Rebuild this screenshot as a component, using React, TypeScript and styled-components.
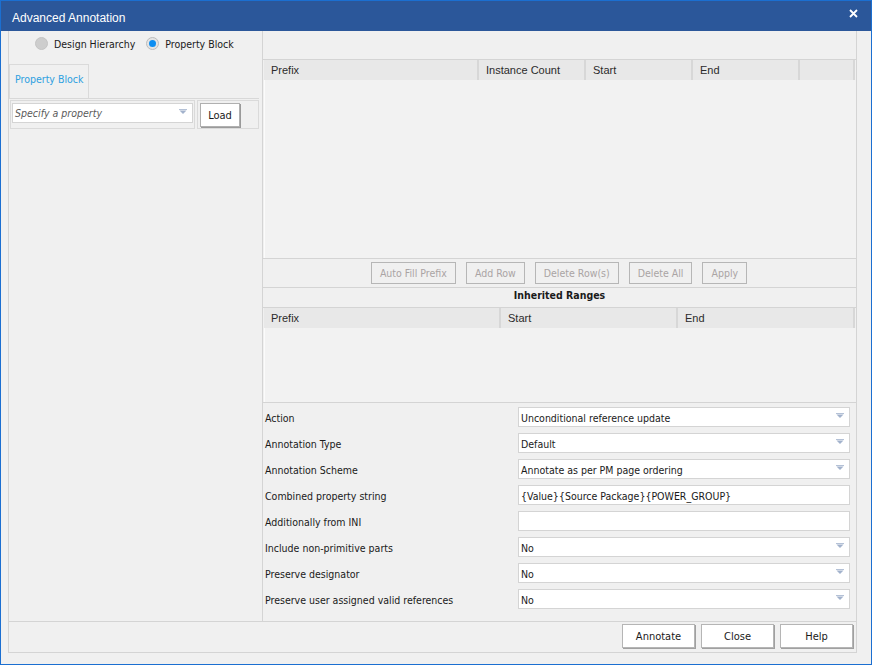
import React from "react";
import styled, { createGlobalStyle } from "styled-components";

const Global = createGlobalStyle`
  html, body { margin: 0; padding: 0; background: #ffffff; }
  * { box-sizing: border-box; }
  #root { width: 872px; height: 665px; }
`;

const UI = `"DejaVu Sans Condensed", "DejaVu Sans", sans-serif`;
const ARIAL = `"Liberation Sans", Arial, sans-serif`;

const Window = styled.div`
  width: 872px;
  height: 665px;
  border: 1px solid #1b6fd1;
  background: #f0f0f0;
  display: flex;
  flex-direction: column;
  font-family: ${UI};
  font-size: 10.5px;
  color: #1a1a1a;
`;

const TitleBar = styled.div`
  height: 30px;
  flex: none;
  background: #2b579a;
  display: flex;
  align-items: center;
  justify-content: space-between;
  padding: 0 13px 0 11px;
`;

const Title = styled.span`
  font-family: ${ARIAL};
  font-size: 12px;
  color: #ffffff;
  margin-top: 3px;
`;

const CloseGlyph = styled.svg`
  width: 9px;
  height: 9px;
  margin-top: -6px;
`;

const Body = styled.div`
  flex: 1;
  padding: 0 13px 11px 7px;
  display: flex;
`;

const Frame = styled.div`
  width: 849px;
  border-left: 1px solid #d4d4d4;
  border-right: 1px solid #d4d4d4;
  border-bottom: 1px solid #d4d4d4;
  display: flex;
  flex-direction: column;
`;

const Main = styled.div`
  height: 590px;
  display: flex;
`;

const LeftPanel = styled.div`
  width: 254px;
  border-right: 1px solid #d4d4d4;
  display: flex;
  flex-direction: column;
`;

const RadioRow = styled.div`
  height: 25px;
  display: flex;
  align-items: center;
  padding-left: 26px;
  gap: 11px;
`;

const RadioItem = styled.label`
  display: flex;
  align-items: center;
  gap: 6px;
  font-size: 10.5px;
`;

const RadioCircle = styled.span<{ $on?: boolean }>`
  width: 13px;
  height: 13px;
  border-radius: 50%;
  border: 1px solid ${(p) => (p.$on ? "#bcbcbc" : "#c4c4c4")};
  background: ${(p) => (p.$on ? "#e4e4e4" : "#cdcdcd")};
  display: flex;
  align-items: center;
  justify-content: center;
  &::after {
    content: "";
    display: ${(p) => (p.$on ? "block" : "none")};
    width: 7px;
    height: 7px;
    border-radius: 50%;
    background: #0d8ef2;
  }
`;

const TabBar = styled.div`
  margin-top: 8px;
  width: 250px;
  height: 35px;
  border-bottom: 1px solid #d8d8d8;
  display: flex;
`;

const Tab = styled.div`
  width: 80px;
  height: 34px;
  border: 1px solid #dadada;
  border-bottom: none;
  color: #2ea0e0;
  font-size: 10.5px;
  display: flex;
  align-items: center;
  padding: 0 0 6px 5px;
`;

const PropRow = styled.div`
  display: flex;
  gap: 2px;
  margin-top: 1px;
  padding-left: 1px;
`;

const Cell = styled.div<{ $w: number }>`
  width: ${(p) => p.$w}px;
  height: 29px;
  border: 1px solid #dadada;
  padding: 2px 1px 0 1px;
  display: flex;
  align-items: flex-start;
`;

const Combo = styled.div<{ $w?: number }>`
  width: ${(p) => (p.$w ? `${p.$w}px` : "100%")};
  height: 20px;
  background: #ffffff;
  border: 1px solid #d4d4d4;
  display: flex;
  align-items: center;
  justify-content: space-between;
  padding: 0 5px 0 2px;
`;

const Placeholder = styled.span`
  font-style: italic;
  color: #5a5a5a;
  font-size: 10.5px;
`;

const Arrow = () => (
  <svg width="8" height="5" viewBox="0 0 8 5" style={{ marginTop: -3 }}>
    <rect x="0" y="0" width="8" height="1" fill="#b4c1d6" />
    <path d="M0.5 1.5 H7.5 L4 5 Z" fill="#a2b2cc" />
  </svg>
);

const LoadButton = styled.button`
  width: 40px;
  height: 24px;
  margin-left: 1px;
  background: #ffffff;
  border: 1px solid #b0b0b0;
  box-shadow: 1px 1px 0 #9a9a9a;
  font-family: ${UI};
  font-size: 11px;
  color: #1a1a1a;
  padding: 0;
`;

const RightPanel = styled.div`
  flex: 1;
  display: flex;
  flex-direction: column;
`;

const TopGap = styled.div`
  height: 28px;
  flex: none;
`;

const Table = styled.div`
  border-top: 1px solid #d4d4d4;
  border-bottom: 1px solid #d4d4d4;
  padding-left: 1px;
`;

const HeaderRow = styled.div<{ $cols: string }>`
  display: grid;
  grid-template-columns: ${(p) => p.$cols};
  height: 20px;
  background: #e8e8e8;
  margin-right: 1px;
`;

const HeaderCell = styled.div`
  border-right: 2px solid #d7d7d7;
  font-family: ${ARIAL};
  font-size: 11px;
  color: #2b2b2b;
  display: flex;
  align-items: center;
  padding-left: 7px;
`;

const TableBody = styled.div<{ $h: number }>`
  height: ${(p) => p.$h}px;
  background: #f2f2f2;
  border-left: 1px solid #fbfbfb;
`;

const Toolbar = styled.div`
  height: 29px;
  border-bottom: 1px solid #d4d4d4;
  display: flex;
  justify-content: center;
  gap: 10px;
  padding-top: 3px;
  padding-right: 1px;
`;

const ToolButton = styled.button`
  height: 22px;
  padding: 0 8px;
  background: #f0f0f0;
  border: 1px solid #b6b6b6;
  color: #aaa4a4;
  font-family: ${UI};
  font-size: 10.5px;
`;

const SectionTitle = styled.div`
  height: 19px;
  display: flex;
  align-items: center;
  justify-content: center;
  font-weight: bold;
  font-size: 10.5px;
  padding-bottom: 5px;
`;

const Form = styled.div`
  display: grid;
  grid-template-columns: 253px 332px;
  grid-auto-rows: 20px;
  row-gap: 6px;
  padding: 4px 0 0 2px;
`;

const Label = styled.div`
  display: flex;
  align-items: center;
  font-size: 10.5px;
  padding-top: 2px;
`;

const TextBox = styled.div`
  height: 20px;
  background: #ffffff;
  border: 1px solid #d4d4d4;
  display: flex;
  align-items: center;
  padding-left: 2px;
`;

const Value = styled.span`
  font-size: 10.5px;
  padding-top: 1px;
`;

const ButtonBar = styled.div`
  flex: 1;
  border-top: 1px solid #d4d4d4;
  display: flex;
  justify-content: flex-end;
  gap: 6px;
  padding: 2px 3px 0 0;
`;

const DialogButton = styled.button`
  width: 73px;
  height: 24px;
  background: #ffffff;
  border: 1px solid #b5b5b5;
  box-shadow: 1px 1px 0 #a0a0a0;
  font-family: ${UI};
  font-size: 11px;
  color: #1a1a1a;
  padding: 0;
`;

const formRows: { label: string; kind: "combo" | "text"; value: string }[] = [
  { label: "Action", kind: "combo", value: "Unconditional reference update" },
  { label: "Annotation Type", kind: "combo", value: "Default" },
  { label: "Annotation Scheme", kind: "combo", value: "Annotate as per PM page ordering" },
  { label: "Combined property string", kind: "text", value: "{Value}{Source Package}{POWER_GROUP}" },
  { label: "Additionally from INI", kind: "text", value: "" },
  { label: "Include non-primitive parts", kind: "combo", value: "No" },
  { label: "Preserve designator", kind: "combo", value: "No" },
  { label: "Preserve user assigned valid references", kind: "combo", value: "No" },
];

export default function App() {
  return (
    <>
      <Global />
      <Window>
        <TitleBar>
          <Title>Advanced Annotation</Title>
          <CloseGlyph viewBox="0 0 9 9">
            <path d="M1 1 L8 8 M8 1 L1 8" stroke="#ffffff" strokeWidth="1.8" />
          </CloseGlyph>
        </TitleBar>
        <Body>
          <Frame>
            <Main>
              <LeftPanel>
                <RadioRow>
                  <RadioItem>
                    <RadioCircle />
                    Design Hierarchy
                  </RadioItem>
                  <RadioItem>
                    <RadioCircle $on />
                    Property Block
                  </RadioItem>
                </RadioRow>
                <TabBar>
                  <Tab>Property Block</Tab>
                </TabBar>
                <PropRow>
                  <Cell $w={185}>
                    <Combo $w={182}>
                      <Placeholder>Specify a property</Placeholder>
                      <Arrow />
                    </Combo>
                  </Cell>
                  <Cell $w={62}>
                    <LoadButton>Load</LoadButton>
                  </Cell>
                </PropRow>
              </LeftPanel>
              <RightPanel>
                <TopGap />
                <Table>
                  <HeaderRow $cols="215px 107px 107px 107px 1fr">
                    <HeaderCell>Prefix</HeaderCell>
                    <HeaderCell>Instance Count</HeaderCell>
                    <HeaderCell>Start</HeaderCell>
                    <HeaderCell>End</HeaderCell>
                    <HeaderCell />
                  </HeaderRow>
                  <TableBody $h={178} />
                </Table>
                <Toolbar>
                  <ToolButton disabled>Auto Fill Prefix</ToolButton>
                  <ToolButton disabled>Add Row</ToolButton>
                  <ToolButton disabled>Delete Row(s)</ToolButton>
                  <ToolButton disabled>Delete All</ToolButton>
                  <ToolButton disabled>Apply</ToolButton>
                </Toolbar>
                <SectionTitle>Inherited Ranges</SectionTitle>
                <Table>
                  <HeaderRow $cols="237px 177px 1fr">
                    <HeaderCell>Prefix</HeaderCell>
                    <HeaderCell>Start</HeaderCell>
                    <HeaderCell>End</HeaderCell>
                  </HeaderRow>
                  <TableBody $h={74} />
                </Table>
                <Form>
                  {formRows.map((r) => (
                    <React.Fragment key={r.label}>
                      <Label>{r.label}</Label>
                      {r.kind === "combo" ? (
                        <Combo>
                          <Value>{r.value}</Value>
                          <Arrow />
                        </Combo>
                      ) : (
                        <TextBox>
                          <Value>{r.value}</Value>
                        </TextBox>
                      )}
                    </React.Fragment>
                  ))}
                </Form>
              </RightPanel>
            </Main>
            <ButtonBar>
              <DialogButton>Annotate</DialogButton>
              <DialogButton>Close</DialogButton>
              <DialogButton>Help</DialogButton>
            </ButtonBar>
          </Frame>
        </Body>
      </Window>
    </>
  );
}
